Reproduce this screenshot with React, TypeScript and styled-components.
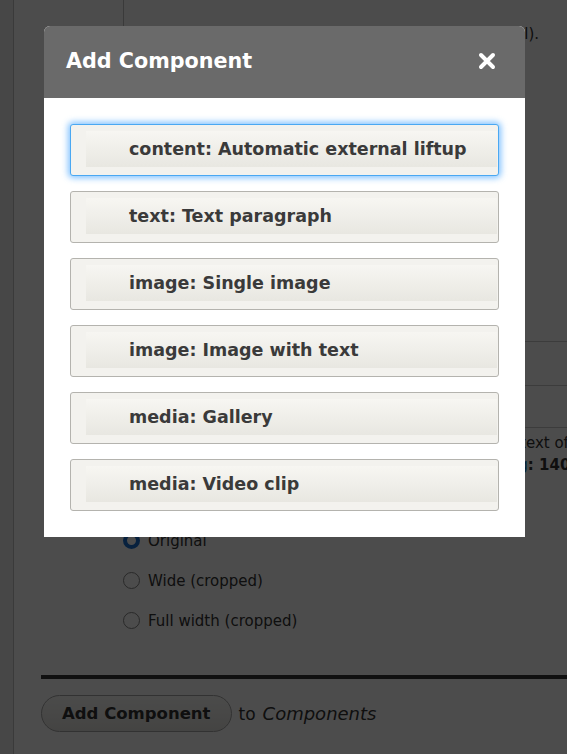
import { memo } from 'react';
import styled, { createGlobalStyle } from 'styled-components';

const GlobalStyle = createGlobalStyle`
  html, body {
    margin: 0;
    padding: 0;
    background: #ffffff;
    font-family: "DejaVu Sans", Verdana, sans-serif;
    color: #333333;
    overflow: hidden;
  }
`;

const Page = styled.div`
  display: flex;
  width: 567px;
  height: 754px;
  overflow: hidden;
`;

const Sidebar = styled.div`
  width: 13px;
  flex-shrink: 0;
  background: #ededed;
  border-right: 1px solid #c4c4c4;
`;

const Main = styled.div`
  flex: 1;
  display: flex;
  flex-direction: column;
  padding-left: 26px;
  min-width: 0;
`;

const IndentBlock = styled.div`
  margin-left: 83px;
  height: 341px;
  border-left: 1px solid #c4c4c4;
  padding: 24px 0 0 8px;
  box-sizing: border-box;
`;

const Description = styled.p`
  margin: 0;
  font-size: 15px;
  line-height: 20px;
  white-space: nowrap;
  text-align: right;
  width: 407px;
`;

const FieldRow = styled.div<{ $height: number }>`
  margin-left: 83px;
  height: ${(p) => p.$height}px;
  border-top: 1px solid #c9c9c9;
  box-sizing: border-box;
  padding: 4px 0 0 310px;
  font-size: 15px;
  line-height: 22px;
  white-space: nowrap;
`;

const Link = styled.a`
  color: #0074bd;
  text-decoration: none;
`;

const Strong = styled.span`
  font-weight: bold;
`;

const RadioList = styled.div`
  margin-left: 83px;
  display: flex;
  flex-direction: column;
  gap: 23px;
  margin-top: -5px;
`;

const RadioItem = styled.label`
  display: flex;
  align-items: center;
  gap: 8px;
  font-size: 15px;
  height: 17px;
`;

const RadioDot = styled.span<{ $checked?: boolean }>`
  width: 17px;
  height: 17px;
  border-radius: 50%;
  box-sizing: border-box;
  border: ${(p) => (p.$checked ? '4px solid #1a6fd0' : '1px solid #888')};
  background: #fff;
`;

const ThickRule = styled.hr`
  margin: 46px 0 0 1px;
  border: 0;
  height: 4px;
  background: #383838;
`;

const Actions = styled.div`
  display: flex;
  align-items: center;
  gap: 7px;
  margin-top: 16px;
  font-size: 17px;
`;

const PillButton = styled.button`
  font-family: inherit;
  font-size: 16.5px;
  font-weight: bold;
  color: #333;
  height: 37px;
  padding: 0 20px;
  border-radius: 19px;
  border: 1px solid #a8a8a8;
  background: linear-gradient(#fcfcfa, #e4e3df);
  margin-left: 1px;
`;

const Italic = styled.em`
  font-style: italic;
  font-size: 18px;
`;

const Overlay = styled.div`
  position: fixed;
  inset: 0;
  background: rgba(0, 0, 0, 0.7);
`;

const Dialog = styled.div`
  position: fixed;
  top: 26px;
  left: 44px;
  width: 481px;
  background: #ffffff;
  border-radius: 6px 6px 0 0;
  overflow: hidden;
`;

const DialogHeader = styled.div`
  height: 72px;
  background: #6a6a6a;
  display: flex;
  align-items: center;
  justify-content: space-between;
  padding: 0 27px 2px 22px;
  box-sizing: border-box;
`;

const DialogTitle = styled.h2`
  margin: 0;
  color: #ffffff;
  font-size: 20.7px;
  font-weight: bold;
`;

const CloseButton = styled.button`
  width: 22px;
  height: 22px;
  padding: 0;
  border: 0;
  background: transparent;
  display: flex;
  align-items: center;
  justify-content: center;
  cursor: pointer;
`;

const DialogBody = styled.div`
  padding: 26px;
  display: flex;
  flex-direction: column;
  gap: 15px;
`;

const ChoiceButton = styled.button<{ $focused?: boolean }>`
  height: 52px;
  padding: 6px 1px 8px 15px;
  box-sizing: border-box;
  display: flex;
  font-family: inherit;
  background: #f3f2ee;
  border-radius: 3px;
  border: 1px solid ${(p) => (p.$focused ? '#4aa8f2' : '#b4b3ae')};
  box-shadow: ${(p) => (p.$focused ? '0 0 6px 2px rgba(90, 175, 255, 0.75)' : 'none')};
  cursor: pointer;
`;

const ChoiceLabel = styled.span`
  flex: 1;
  display: flex;
  align-items: center;
  padding-left: 43px;
  background: linear-gradient(#f7f6f2, #e8e7e1);
  font-size: 17.5px;
  font-weight: bold;
  color: #3a3a3a;
  white-space: nowrap;
`;

const choices = [
  'content: Automatic external liftup',
  'text: Text paragraph',
  'image: Single image',
  'image: Image with text',
  'media: Gallery',
  'media: Video clip',
];

const App = () => (
  <>
    <GlobalStyle />
    <Page>
      <Sidebar />
      <Main>
        <IndentBlock>
          <Description>Caption for the image (optional).</Description>
        </IndentBlock>
        <FieldRow $height={44} />
        <FieldRow $height={42} />
        <FieldRow $height={110}>
          Alternative text of the image
          <br />
          <Link>Image sizing</Link>
          <Strong>: 1400 × 788</Strong>
        </FieldRow>
        <RadioList>
          <RadioItem>
            <RadioDot $checked />
            Original
          </RadioItem>
          <RadioItem>
            <RadioDot />
            Wide (cropped)
          </RadioItem>
          <RadioItem>
            <RadioDot />
            Full width (cropped)
          </RadioItem>
        </RadioList>
        <ThickRule />
        <Actions>
          <PillButton>Add Component</PillButton>
          to <Italic>Components</Italic>
        </Actions>
      </Main>
    </Page>
    <Overlay />
    <Dialog>
      <DialogHeader>
        <DialogTitle>Add Component</DialogTitle>
        <CloseButton aria-label="Close">
          <svg width="18" height="18" viewBox="0 0 18 18">
            <path d="M3 3 L15 15 M15 3 L3 15" stroke="#fff" strokeWidth="4" strokeLinecap="round" />
          </svg>
        </CloseButton>
      </DialogHeader>
      <DialogBody>
        {choices.map((choice, index) => (
          <ChoiceButton key={choice} $focused={index === 0}>
            <ChoiceLabel>{choice}</ChoiceLabel>
          </ChoiceButton>
        ))}
      </DialogBody>
    </Dialog>
  </>
);

export default memo(App);
